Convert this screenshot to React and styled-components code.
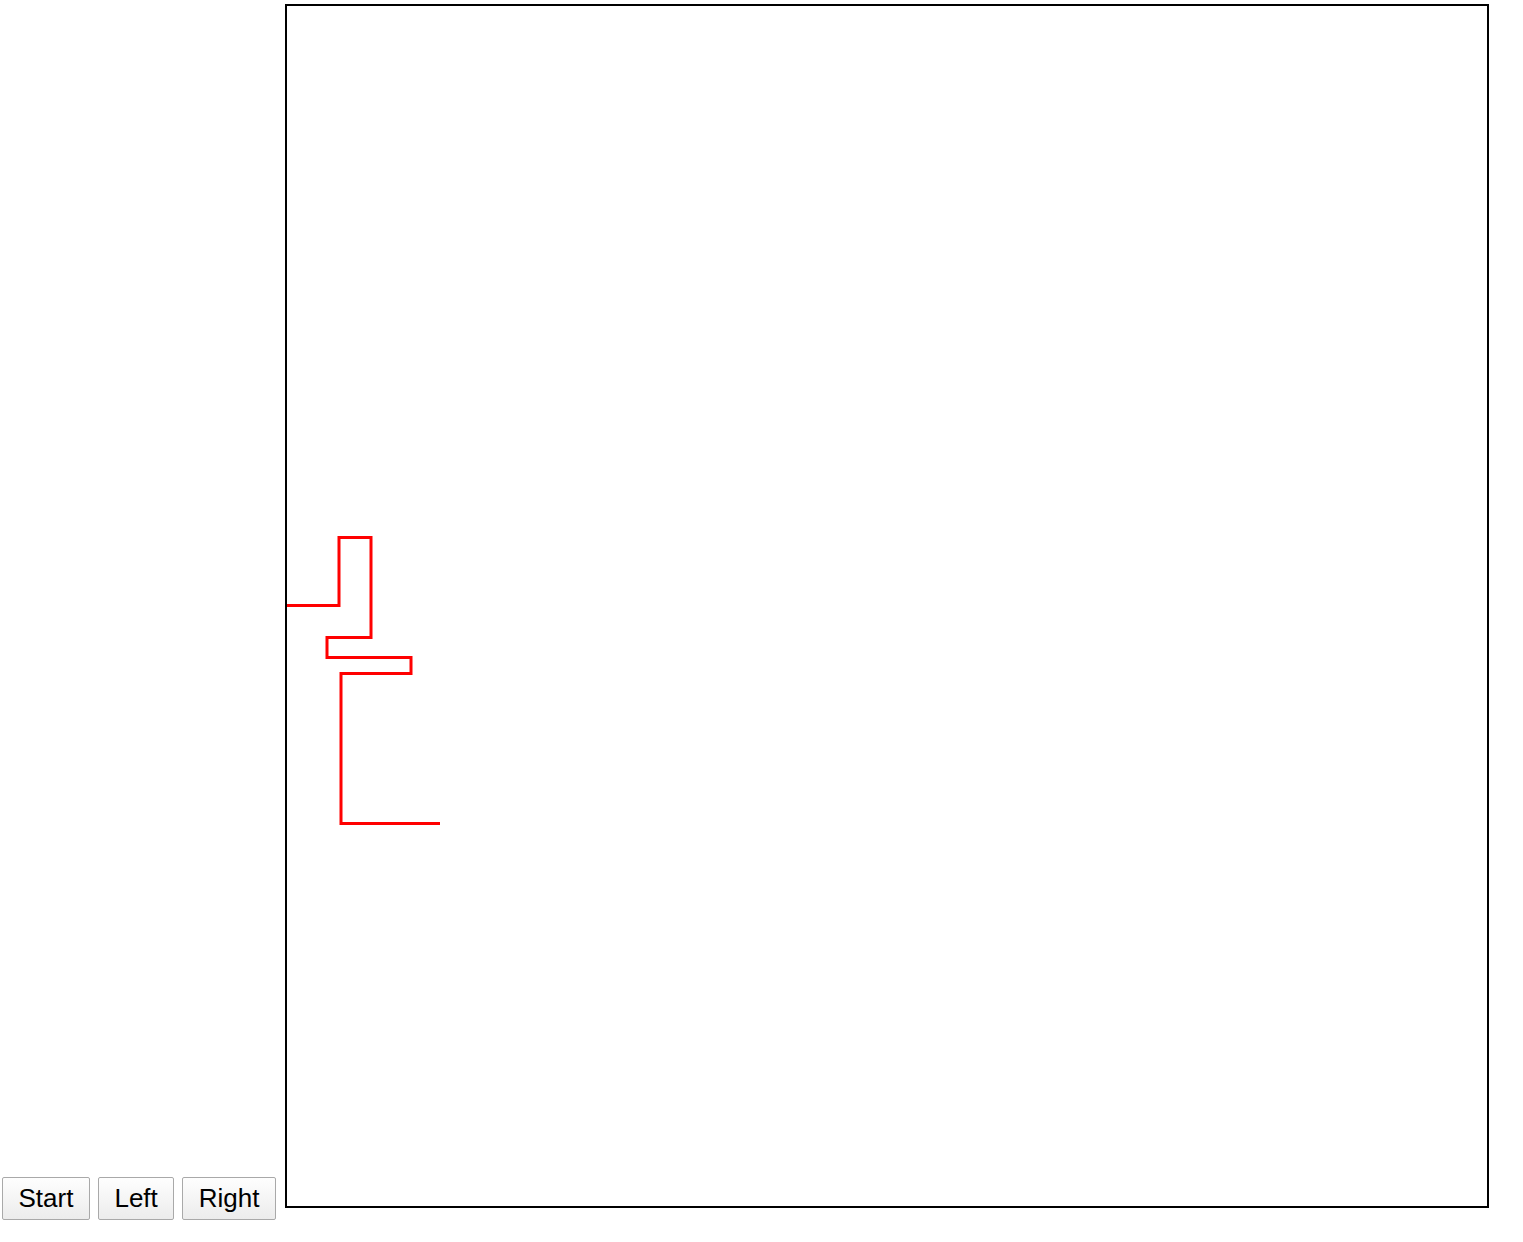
import React from 'react'
import styled, { createGlobalStyle } from 'styled-components'

const GlobalStyle = createGlobalStyle`
  body {
    margin: 0;
    background: #fff;
    font-family: "Liberation Sans", Arial, sans-serif;
  }
`;

const Page = styled.div`
  display: flex;
  align-items: flex-end;
  gap: 9px;
  padding: 0 0 0 2px;
`;

const Controls = styled.div`
  display: flex;
  gap: 8px;
`;

const Button = styled.button`
  font-family: "Liberation Sans", Arial, sans-serif;
  font-size: 26px;
  line-height: 30px;
  color: #000;
  padding: 5px 15.5px 6px;
  margin: 0;
  border: 1px solid #a9a9a9;
  border-radius: 2px;
  background: linear-gradient(#fefefe, #ececec);
`;

const Board = styled.div`
  width: 1200px;
  height: 1200px;
  border: 2px solid #000;
  margin: 4px 0 12px;
  flex-shrink: 0;
`;

// trail of the snake, in board coordinates
const trail = [
  [0, 599.5], [52, 599.5], [52, 531.5], [84, 531.5], [84, 631.5],
  [40, 631.5], [40, 651.5], [124, 651.5], [124, 667.5], [54, 667.5],
  [54, 817.5], [153, 817.5],
]

const App = () => (
  <>
    <GlobalStyle />
    <Page>
      <Controls>
        <Button type="button">Start</Button>
        <Button type="button">Left</Button>
        <Button type="button">Right</Button>
      </Controls>
      <Board>
        <svg width="1200" height="1200" viewBox="0 0 1200 1200">
          <polyline
            points={trail.map(p => p.join(',')).join(' ')}
            fill="none"
            stroke="#ff0000"
            strokeWidth="3"
          />
        </svg>
      </Board>
    </Page>
  </>
)

export default App
